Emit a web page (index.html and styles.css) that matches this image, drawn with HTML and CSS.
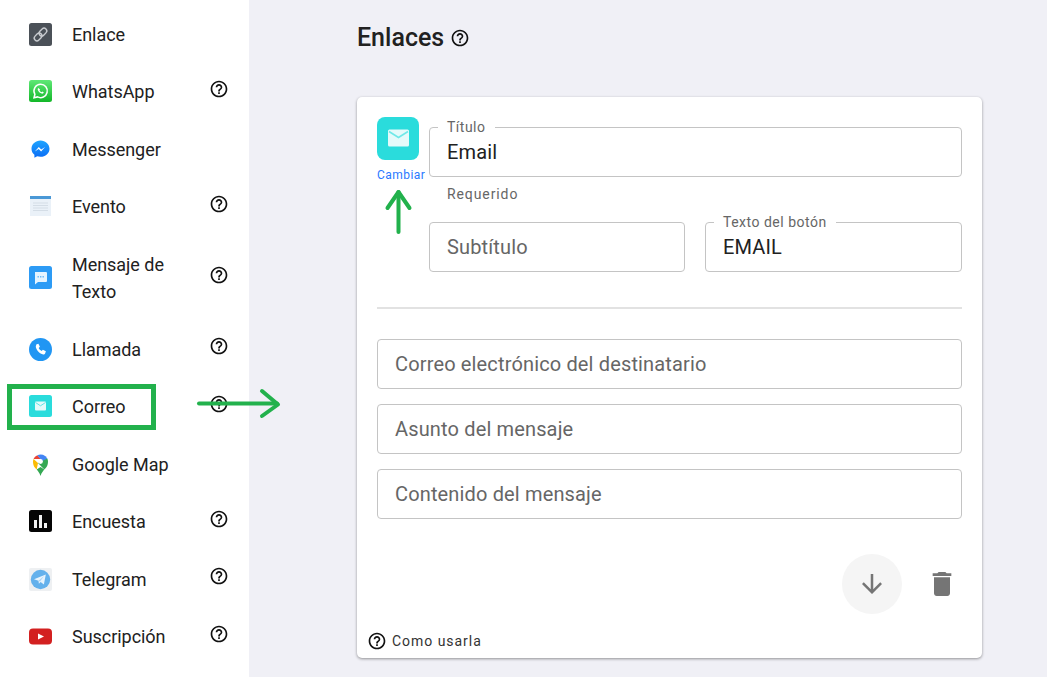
FILE: index.html
```html
<!DOCTYPE html>
<html lang="es">
<head>
<meta charset="utf-8">
<title>Enlaces</title>
<link rel="stylesheet" href="styles.css">
</head>
<body>
<svg width="0" height="0" class="defs">
  <defs>
    <symbol id="help" viewBox="0 0 24 24"><path d="M11 18h2v-2h-2v2zm1-16C6.48 2 2 6.48 2 12s4.48 10 10 10 10-4.48 10-10S17.52 2 12 2zm0 18c-4.41 0-8-3.59-8-8s3.59-8 8-8 8 3.59 8 8-3.59 8-8 8zm0-14c-2.21 0-4 1.79-4 4h2c0-1.1.9-2 2-2s2 .9 2 2c0 2-3 1.75-3 5h2c0-2.25 3-2.5 3-5 0-2.21-1.79-4-4-4z"/></symbol>
    <linearGradient id="wa" x1="0" y1="0" x2="0" y2="1"><stop offset="0" stop-color="#5fe876"/><stop offset="1" stop-color="#12b728"/></linearGradient>
    <linearGradient id="ms" x1="0" y1="0" x2="0" y2="1"><stop offset="0" stop-color="#1fa5ff"/><stop offset="1" stop-color="#0a6cf5"/></linearGradient>
  </defs>
</svg>
<aside class="sidebar">
  <div class="item">
    <svg class="ico" viewBox="0 0 23 23"><rect width="23" height="23" rx="2.5" fill="#4b5158"/><g fill="none" stroke="#c9ccd0" stroke-width="1.4" transform="rotate(-45 11.5 11.5)"><rect x="3.8" y="8.8" width="8.6" height="5.4" rx="2.7"/><rect x="10.6" y="8.8" width="8.6" height="5.4" rx="2.7"/></g></svg>
    <span class="label">Enlace</span>
  </div>
  <div class="item">
    <svg class="ico" viewBox="0 0 23 23"><rect width="23" height="22" rx="2.5" fill="url(#wa)"/><path d="M11.7 4.2a6.7 6.7 0 0 0-5.8 10.1L5 17.8l3.6-.9a6.7 6.7 0 1 0 3.1-12.7z" fill="none" stroke="#fff" stroke-width="1.5"/><path d="M9.4 7.9c-.7.5-.9 1.5-.3 2.7.7 1.4 2 2.6 3.500 3 1 .3 1.900-.2 2.200-1l-1.500-1-.8.7c-.9-.4-1.600-1.100-2-2l.6-.8z" fill="#fff"/></svg>
    <span class="label">WhatsApp</span>
    <svg class="help"><use href="#help"/></svg>
  </div>
  <div class="item">
    <svg class="ico" viewBox="0 0 23 23"><path d="M11.500 2.400c-5 0-9 3.600-9 8.300 0 2.500 1.100 4.600 2.900 6.100v3l2.800-1.500c1 .3 2.100.5 3.300.5 5 0 9-3.600 9-8.100s-4-8.300-9-8.300z" fill="url(#ms)"/><path d="M5.800 13.400l4-4.300 2.400 2.300 3.900-2.300-4 4.300-2.400-2.300z" fill="#fff"/></svg>
    <span class="label">Messenger</span>
  </div>
  <div class="item">
    <svg class="ico" viewBox="0 0 23 23"><rect x="1" y="1" width="21" height="20" fill="#eaf1f8"/><rect x="1" y="1" width="21" height="3" fill="#4a98d6"/><path d="M4 8h15M4 10.500h15M4 13h15M4 15.500h15" stroke="#d4dde6"/></svg>
    <span class="label">Evento</span>
    <svg class="help"><use href="#help"/></svg>
  </div>
  <div class="item item-tall">
    <svg class="ico" viewBox="0 0 23 23"><rect width="23" height="23" rx="2.500" fill="#2d9bf5"/><path d="M6 6h11a1 1 0 0 1 1 1v8a1 1 0 0 1-1 1H9l-3 2.500V7z" fill="#e6f4ff"/><path d="M8.500 10.800h1.400M11 10.800h1.400M13.500 10.800h1.400" stroke="#6cb9f8" stroke-width="1.400"/></svg>
    <span class="label">Mensaje de Texto</span>
    <svg class="help"><use href="#help"/></svg>
  </div>
  <div class="item">
    <svg class="ico" viewBox="0 0 23 23"><circle cx="11.500" cy="11.500" r="11.500" fill="#2196f3"/><path d="M7 6.500l2.400-.8 1.500 3-1.200 1.300c.6 1.300 1.500 2.200 2.900 2.900l1.300-1.200 3 1.500-.8 2.400c-.3.700-1.100 1-1.900.8-3.500-.8-6.600-3.900-7.400-7.400-.1-.7.100-1.400.6-2.500z" fill="#fff"/></svg>
    <span class="label">Llamada</span>
    <svg class="help"><use href="#help"/></svg>
  </div>
  <div class="item">
    <svg class="ico" viewBox="0 0 23 23"><rect width="23" height="22" rx="2.500" fill="#2adcdc"/><rect x="6" y="6.500" width="11" height="9" rx="1" fill="#e4fafa"/><path d="M6.500 7.500l5 3.300 5-3.300" fill="none" stroke="#5fe6e6" stroke-width="1"/></svg>
    <span class="label">Correo</span>
    <svg class="help"><use href="#help"/></svg>
  </div>
  <div class="item">
    <svg class="ico" viewBox="0 0 23 23"><path d="M11.500 23c-1-3-2.500-4.800-3.800-6.400l3.800-2.600 3.800 2.600C14 18.200 12.500 20 11.500 23z" fill="#34a853"/><path d="M7.700 16.600C6.600 15.200 4 13.500 4 8.500c0-.9.200-1.800.6-2.600L9 10z" fill="#fbbc04"/><path d="M4.600 5.900C5.300 4.300 6.600 3 8.300 2.200L12 6z" fill="#ea4335"/><path d="M8.300 2.200A7.500 7.500 0 0 1 18.300 5.400L14 9z" fill="#4285f4"/><path d="M18.300 5.400c.5 1 .7 2 .7 3.100 0 5-2.600 6.700-3.700 8.100L9 10z" fill="#34a853"/><circle cx="11.500" cy="8.500" r="2.400" fill="#fff"/></svg>
    <span class="label">Google Map</span>
  </div>
  <div class="item">
    <svg class="ico" viewBox="0 0 23 23"><rect width="23" height="22" rx="2.500" fill="#050505"/><path d="M5 10h3v8H5zM10 5h3v13h-3zM15 13h3v5h-3z" fill="#f2f2f2"/></svg>
    <span class="label">Encuesta</span>
    <svg class="help"><use href="#help"/></svg>
  </div>
  <div class="item">
    <svg class="ico" viewBox="0 0 23 23"><rect width="23" height="23" rx="2" fill="#eef0f2"/><circle cx="11.500" cy="11.500" r="9.700" fill="#64b1ec"/><path d="M5 11.200l11.800-4.700-1.900 10-3.300-2.400-1.700 1.700-.4-3z" fill="#e6f3fd"/><path d="M9.500 12.800l5.500-4.800-4 5.500z" fill="#a8d3f4"/></svg>
    <span class="label">Telegram</span>
    <svg class="help"><use href="#help"/></svg>
  </div>
  <div class="item">
    <svg class="ico" viewBox="0 0 23 23"><rect y="3.500" width="23" height="16" rx="4" fill="#d32020"/><path d="M9 8.500l6 3-6 3z" fill="#fff"/></svg>
    <span class="label">Suscripción</span>
    <svg class="help"><use href="#help"/></svg>
  </div>
</aside>
<main class="main">
  <h1 class="title">Enlaces <svg class="help help-title"><use href="#help"/></svg></h1>
  <section class="card">
    <div class="top">
      <div class="pick">
        <svg class="pick-ico" viewBox="0 0 42 43"><rect width="42" height="43" rx="8" fill="#2adcdc"/><rect x="11" y="12.500" width="21" height="17" rx="1.500" fill="#e4fafa"/><path d="M12 14.500l9.500 6 9.500-6" fill="none" stroke="#6fe8e8" stroke-width="1.600"/></svg>
        <span class="change">Cambiar</span>
      </div>
      <div class="fields">
        <div class="field has-legend"><span class="legend">Título</span>Email</div>
        <div class="hint">Requerido</div>
        <div class="pair">
          <div class="field muted">Subtítulo</div>
          <div class="field has-legend"><span class="legend">Texto del botón</span>EMAIL</div>
        </div>
      </div>
    </div>
    <hr class="rule">
    <div class="stack">
      <div class="field muted">Correo electrónico del destinatario</div>
      <div class="field muted">Asunto del mensaje</div>
      <div class="field muted">Contenido del mensaje</div>
    </div>
    <div class="actions">
      <span class="round"><svg class="arrow" viewBox="0 0 24 24"><path d="M20 12l-1.410-1.410L13 16.170V4h-2v12.170l-5.580-5.590L4 12l8 8 8-8z"/></svg></span>
      <svg class="trash" viewBox="0 0 24 24"><path d="M6 19c0 1.100.9 2 2 2h8c1.100 0 2-.9 2-2V7H6v12zM19 4h-3.500l-1-1h-5l-1 1H5v2h14V4z"/></svg>
    </div>
    <div class="howto"><svg class="help"><use href="#help"/></svg>Como usarla</div>
  </section>
</main>
<svg class="notes" width="1047" height="677" viewBox="0 0 1047 677">
  <g fill="none" stroke="#22b14c">
    <rect x="9.500" y="386.500" width="144" height="41" stroke-width="5"/>
    <g stroke-width="4" stroke-linecap="round" stroke-linejoin="round">
      <path d="M199 403.500H277"/>
      <path d="M262 391l16 13.500-16 11.500"/>
      <path d="M398.500 232V192"/>
      <path d="M387.500 208l11-16 11 16"/>
    </g>
  </g>
</svg>
</body>
</html>
```
FILE: styles.css
```css
* { box-sizing: border-box; }
html, body { margin: 0; height: 100%; overflow: hidden; }
body {
  display: flex;
  position: relative;
  background: #f0f0f6;
  font-family: Roboto, "Liberation Sans", sans-serif;
  color: #212121;
}
.defs { position: absolute; }
.sidebar {
  width: 249px;
  flex: none;
  background: #fff;
  padding: 5.7px 20px 0 29px;
}
.item {
  display: flex;
  align-items: center;
  padding: 15.25px 0;
  font-size: 18px;
  line-height: 27px;
  letter-spacing: -.04px;
}
.item-tall { padding-bottom: 15.55px; }
.ico { width: 23px; height: 23px; flex: none; margin-right: 20px; }
.label { flex: 1; max-width: 130px; margin-right: auto; }
.help { width: 20px; height: 20px; flex: none; fill: #111; }
.item .help { margin-bottom: 6px; }
.main { flex: 1; padding-left: 108px; }
.title {
  display: flex;
  align-items: center;
  gap: 6px;
  height: 97px;
  margin: 0;
  padding-bottom: 22px;
  font-size: 25px;
  font-weight: 500;
  color: #212121;
}
.card {
  width: 625px;
  height: 561px;
  background: #fff;
  border-radius: 5px;
  box-shadow: 0 1px 3px rgba(0,0,0,.4);
  padding: 20px 20px 0;
  display: flex;
  flex-direction: column;
}
.top { display: flex; }
.pick { width: 52px; flex: none; display: flex; flex-direction: column; }
.pick-ico { width: 42px; height: 43px; }
.change { margin-top: 8px; font-size: 12px; line-height: 14px; color: #2979ff; letter-spacing: .45px; white-space: nowrap; }
.fields { flex: 1; padding-top: 10px; }
.field {
  position: relative;
  height: 50px;
  border: 1px solid #c4c4c4;
  border-radius: 4px;
  padding: 0 17px;
  font-size: 20px;
  line-height: 48px;
  letter-spacing: .15px;
  color: #212121;
}
.muted { color: #666; }
.legend {
  position: absolute;
  top: -10px;
  left: 8px;
  padding: 0 9px;
  background: #fff;
  font-size: 14px;
  line-height: 18px;
  letter-spacing: .5px;
  color: #666;
}
.hint { font-size: 14px; line-height: 18px; letter-spacing: .9px; color: #666; margin: 8px 0 19px 18px; }
.pair { display: flex; gap: 20px; }
.pair .field { flex: 1; }
.pair .field:first-child { flex: 0 0 256px; }
.rule { width: 100%; margin: 35px 0 30px; border: 0; border-top: 2px solid #e2e2e2; }
.stack { display: flex; flex-direction: column; gap: 15px; }
.actions { display: flex; align-items: center; justify-content: flex-end; margin-top: 35px; padding-right: 4px; gap: 24px; }
.round { width: 60px; height: 60px; border-radius: 50%; background: #f5f5f5; display: flex; align-items: center; justify-content: center; }
.arrow { width: 30px; height: 30px; fill: #757575; }
.trash { width: 32px; height: 32px; fill: #757575; }
.howto { display: flex; align-items: center; gap: 5px; margin: 17px 0 0 -10px; font-size: 14px; line-height: 20px; letter-spacing: .96px; color: #333; }
.notes { position: absolute; left: 0; top: 0; pointer-events: none; }
```
